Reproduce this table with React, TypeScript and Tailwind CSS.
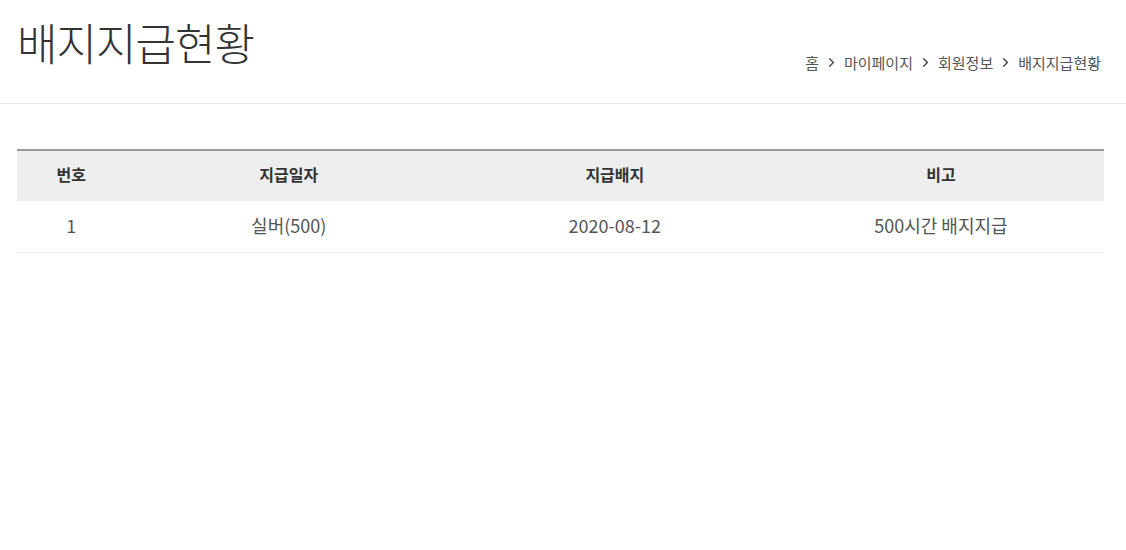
import { ChevronRight } from "lucide-react";

const crumbs = ["홈", "마이페이지", "회원정보", "배지지급현황"];

const rows = [{ no: 1, date: "실버(500)", badge: "2020-08-12", note: "500시간 배지지급" }];

export default function App() {
  return (
    <div className="min-h-[550px] bg-white text-[#333]" style={{ fontFamily: '"Noto Sans CJK KR", "Noto Sans", sans-serif' }}>
      <div className="flex items-end justify-between border-b border-[#e8e8e8] px-[17px] pb-[29px] pt-[10px]">
        <h1 className="text-[44px] font-light leading-[64px] tracking-[-1px] text-[#333]">배지지급현황</h1>
        <nav className="flex items-center gap-[5px] pr-[8px] text-[15px] text-[#555]">
          {crumbs.map((c, i) => (
            <span key={c} className="flex items-center gap-[5px]">
              {i > 0 && <ChevronRight size={15} strokeWidth={2.2} className="text-[#444]" />}
              <span>{c}</span>
            </span>
          ))}
        </nav>
      </div>

      <div className="px-[17px] pr-[22px] pt-[45px]">
        <table className="w-full table-fixed border-t-2 border-[#999]">
          <colgroup>
            <col className="w-[10%]" />
            <col className="w-[30%]" />
            <col className="w-[30%]" />
            <col className="w-[30%]" />
          </colgroup>
          <thead>
            <tr className="h-[51px] bg-[#eeeeee] text-[16px] font-bold text-[#333]">
              <th className="pb-[5px]">번호</th>
              <th className="pb-[5px]">지급일자</th>
              <th className="pb-[5px]">지급배지</th>
              <th className="pb-[5px]">비고</th>
            </tr>
          </thead>
          <tbody>
            {rows.map((r) => (
              <tr key={r.no} className="h-[51px] border-b border-[#eeeeee] text-center text-[18px] text-[#555]">
                <td className="pb-[2px]">{r.no}</td>
                <td className="pb-[2px]">{r.date}</td>
                <td className="pb-[2px]">{r.badge}</td>
                <td className="pb-[2px]">{r.note}</td>
              </tr>
            ))}
          </tbody>
        </table>
      </div>
    </div>
  );
}
